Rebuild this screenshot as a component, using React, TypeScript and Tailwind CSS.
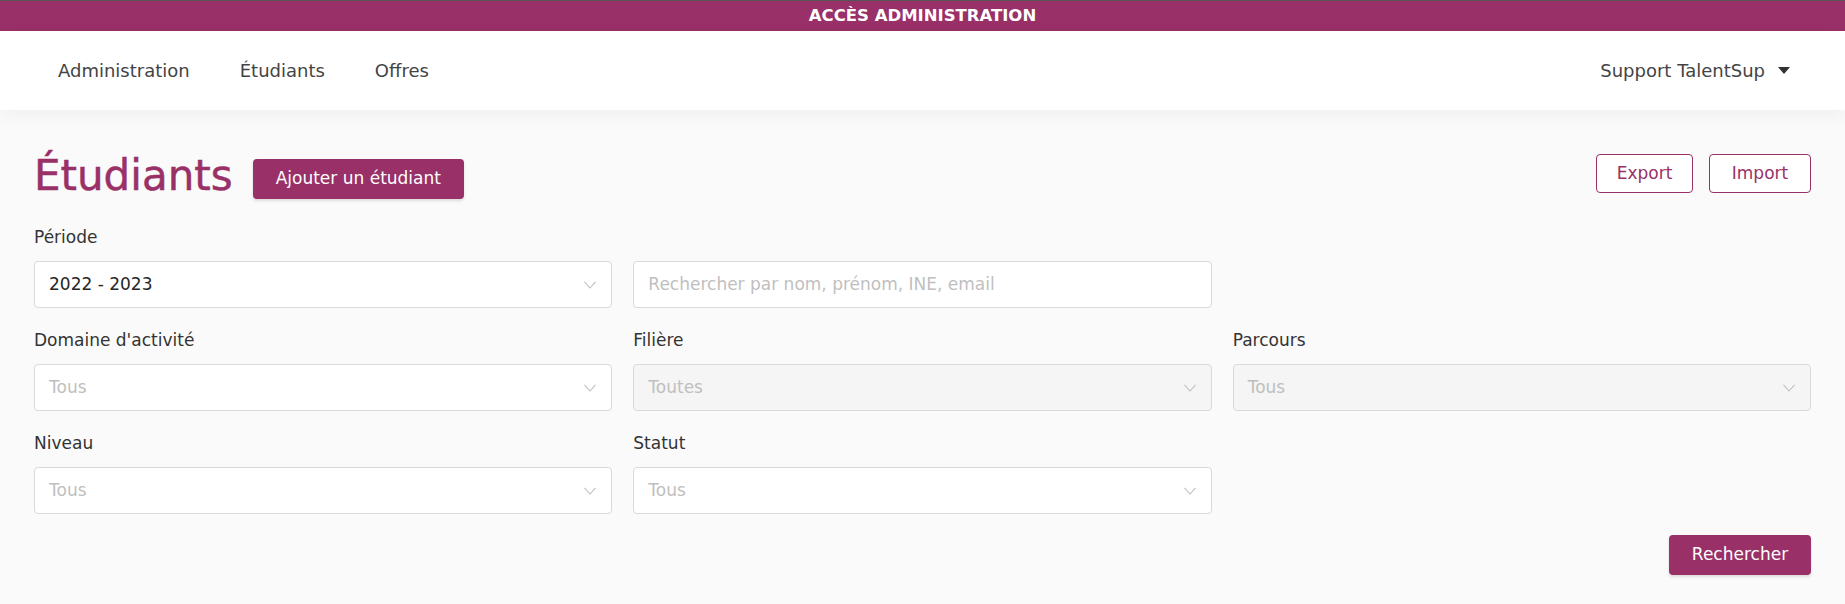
import type { ReactNode } from "react";

const PURPLE = "#993067";

function Chevron() {
  return (
    <svg width="12" height="8" viewBox="0 0 12 8" fill="none" className="ml-auto shrink-0">
      <polyline points="0.5,0.8 6,7 11.5,0.8" stroke="#bfbfbf" strokeWidth="1.1" />
    </svg>
  );
}

type SelectProps = {
  value?: string;
  placeholder?: string;
  disabled?: boolean;
};

function FakeSelect({ value, placeholder, disabled }: SelectProps) {
  return (
    <div
      className={`flex h-[47px] items-center rounded-[4px] border border-[#d9d9d9] pl-[14px] pr-[15px] text-[17px] ${
        disabled ? "bg-[#f5f5f5]" : "bg-white"
      }`}
    >
      {value ? (
        <span className="text-[#262626]">{value}</span>
      ) : (
        <span className="text-[#bfbfbf]">{placeholder}</span>
      )}
      <Chevron />
    </div>
  );
}

function Field({ label, children }: { label?: string; children: ReactNode }) {
  return (
    <div>
      <div className="mb-[12px] h-[24px] text-[17px] leading-[24px] text-[#333]">{label}</div>
      {children}
    </div>
  );
}

export default function App() {
  return (
    <div className="min-h-screen bg-[#fafafa] font-['DejaVu_Sans',sans-serif]">
      <div className="flex h-[31px] items-center justify-center border-t border-[#555] bg-[#993067] text-[16.5px] font-bold uppercase text-white">
        ACCÈS ADMINISTRATION
      </div>

      <nav className="relative z-10 flex h-[79px] items-center justify-between bg-white pl-[58px] pr-[55px] shadow-[0_4px_18px_rgba(0,0,0,0.05)]">
        <div className="flex gap-[50px] text-[18px] text-[#444]">
          <span>Administration</span>
          <span>Étudiants</span>
          <span>Offres</span>
        </div>
        <div className="flex items-center gap-[13px] text-[18px] text-[#444]">
          <span>Support TalentSup</span>
          <svg width="12" height="7" viewBox="0 0 12 7">
            <polygon points="0,0 12,0 6,7" fill="#333" />
          </svg>
        </div>
      </nav>

      <main className="px-[34px] pt-[42px] pb-[29px]">
        <div className="flex items-start justify-between">
          <div className="flex items-start gap-[20px]">
            <h1
              className="text-[42px] font-medium leading-[48px] [-webkit-text-stroke:0.5px_#993067]"
              style={{ color: PURPLE }}
            >
              Étudiants
            </h1>
            <button
              type="button"
              className="mt-[7px] h-[40px] rounded-[4px] bg-[#993067] px-[23px] text-[17px] text-white shadow-[0_2px_3px_rgba(0,0,0,0.12)]"
            >
              Ajouter un étudiant
            </button>
          </div>
          <div className="mt-[2px] flex gap-[16px]">
            <button
              type="button"
              className="h-[39px] w-[97px] rounded-[4px] border border-[#993067] bg-white text-[17px] text-[#993067]"
            >
              Export
            </button>
            <button
              type="button"
              className="h-[39px] w-[102px] rounded-[4px] border border-[#993067] bg-white text-[17px] text-[#993067]"
            >
              Import
            </button>
          </div>
        </div>

        <div className="mt-[25px] grid grid-cols-3 gap-x-[21px] gap-y-[20px]">
          <Field label="Période">
            <FakeSelect value="2022 - 2023" />
          </Field>
          <Field>
            <div className="flex h-[47px] items-center rounded-[4px] border border-[#d9d9d9] bg-white px-[14px] text-[17px] text-[#bfbfbf]">
              Rechercher par nom, prénom, INE, email
            </div>
          </Field>
          <div />

          <Field label="Domaine d'activité">
            <FakeSelect placeholder="Tous" />
          </Field>
          <Field label="Filière">
            <FakeSelect placeholder="Toutes" disabled />
          </Field>
          <Field label="Parcours">
            <FakeSelect placeholder="Tous" disabled />
          </Field>

          <Field label="Niveau">
            <FakeSelect placeholder="Tous" />
          </Field>
          <Field label="Statut">
            <FakeSelect placeholder="Tous" />
          </Field>
          <div />
        </div>

        <div className="mt-[21px] flex justify-end">
          <button
            type="button"
            className="h-[40px] w-[142px] rounded-[4px] bg-[#993067] text-[17px] text-white shadow-[0_2px_3px_rgba(0,0,0,0.12)]"
          >
            Rechercher
          </button>
        </div>
      </main>
    </div>
  );
}
